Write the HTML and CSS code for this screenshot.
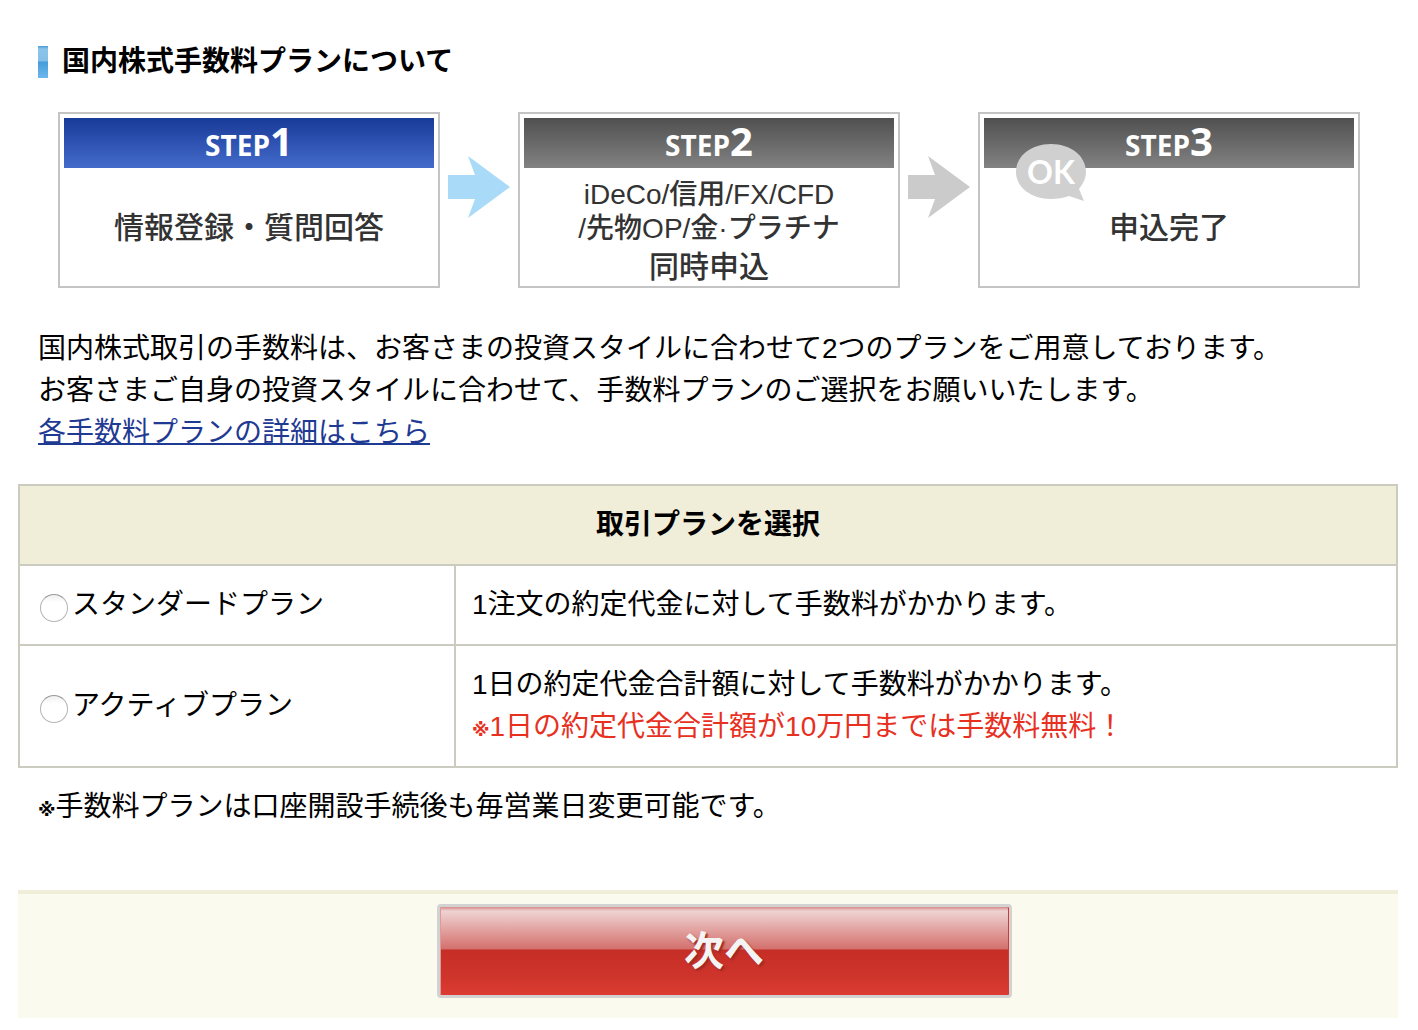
FILE: index.html
```
<!DOCTYPE html>
<html lang="ja">
<head>
  <meta charset="UTF-8">
  <title>国内株式手数料プランについて</title>
  <meta name="viewport" content="width=device-width, initial-scale=1.0">
  <link rel="stylesheet" href="styles.css">
</head>
<body>
  <h1 class="page-title">国内株式手数料プランについて</h1>

  <!-- Steps -->
  <div class="steps">
    <div class="step current">
      <div class="step-head">STEP<span class="num">1</span></div>
      <div class="step-body">情報登録・質問回答</div>
    </div>
    <svg class="arrow active" viewBox="0 0 62 62"><path d="M0 19H27L20 0L62 31L20 62L27 43H0Z"/></svg>
    <div class="step">
      <div class="step-head">STEP<span class="num">2</span></div>
      <div class="step-body">
        <div class="step-list">iDeCo/信用/FX/CFD<br>/先物OP/金·プラチナ</div>
        <div>同時申込</div>
      </div>
    </div>
    <svg class="arrow" viewBox="0 0 62 62"><path d="M0 19H27L20 0L62 31L20 62L27 43H0Z"/></svg>
    <div class="step">
      <div class="step-head">STEP<span class="num">3</span></div>
      <div class="step-body">申込完了</div>
      <div class="ok">
        <svg class="bubble" viewBox="0 0 72 58"><path d="M36 0C56 0 71 12 71 28C71 34 68 40 64 45L69 57L54 52C49 54 42 55 36 55C16 55 1 43 1 28C1 12 16 0 36 0Z"/></svg>
        <span class="ok-text">OK</span>
      </div>
    </div>
  </div>

  <div class="lead">
    国内株式取引の手数料は、お客さまの投資スタイルに合わせて2つのプランをご用意しております。<br>
    お客さまご自身の投資スタイルに合わせて、手数料プランのご選択をお願いいたします。<br>
    <a href="#">各手数料プランの詳細はこちら</a>
  </div>

  <form>
    <table class="plans">
      <tr>
        <th colspan="2">取引プランを選択</th>
      </tr>
      <tr>
        <td class="plan"><div class="choice"><input type="radio" name="plan" id="standard"><label for="standard">スタンダードプラン</label></div></td>
        <td>1注文の約定代金に対して手数料がかかります。</td>
      </tr>
      <tr>
        <td class="plan"><div class="choice"><input type="radio" name="plan" id="active"><label for="active">アクティブプラン</label></div></td>
        <td>1日の約定代金合計額に対して手数料がかかります。<br><span class="red"><span class="mark">※</span>1日の約定代金合計額が10万円までは手数料無料！</span></td>
      </tr>
    </table>

    <p class="note"><span class="mark">※</span>手数料プランは口座開設手続後も毎営業日変更可能です。</p>

    <div class="submit-area">
      <button type="submit" class="next">次へ</button>
    </div>
  </form>
</body>
</html>
```
FILE: styles.css
```
* {
  box-sizing: border-box;
}

body {
  margin: 0;
  padding: 41px 20px 12px 18px;
  font-family: "Liberation Sans", "Noto Sans CJK JP", sans-serif;
  font-size: 28px;
  line-height: 42px;
  color: #000;
  background: #fff;
}

.page-title {
  display: flex;
  align-items: center;
  gap: 14px;
  margin: 0 20px;
  font-size: 28px;
  font-weight: bold;
}

.page-title::before {
  content: "";
  width: 10px;
  height: 32px;
  background: linear-gradient(#4a9cd6 0, #8cc4ea 3px, #84bee8 15px, #459cda 16px, #5aaae4 24px, #6cb8ee);
}

/* steps */
.steps {
  display: flex;
  align-items: stretch;
  gap: 8px;
  margin: 29px 38px 40px 40px;
}

.step {
  position: relative;
  flex: 1;
  display: flex;
  flex-direction: column;
  min-height: 176px;
  padding: 4px;
  border: 2px solid #c4c4c4;
  color: #333;
}

.step-head {
  height: 50px;
  line-height: 46px;
  background: linear-gradient(#505050, #828282);
  color: #fff;
  font-family: "Open Sans", sans-serif;
  font-size: 28px;
  font-weight: bold;
  text-align: center;
}

.step.current .step-head {
  background: linear-gradient(#183a98, #446bcb);
}

.step-head .num {
  font-size: 40px;
}

.step-body {
  flex: 1;
  display: flex;
  flex-direction: column;
  justify-content: center;
  font-family: "Noto Sans CJK JP", sans-serif;
  font-size: 30px;
  font-weight: 500;
  line-height: 36px;
  text-align: center;
}

.step-list {
  padding-top: 10px;
  font-family: "Liberation Sans", "Noto Sans CJK JP", sans-serif;
  font-size: 28px;
  line-height: 34px;
}

.arrow {
  flex: none;
  align-self: flex-start;
  width: 62px;
  height: 62px;
  margin-top: 44px;
  fill: #cbcbcb;
}

.arrow.active {
  fill: #a9dbf9;
}

.ok {
  position: absolute;
  top: 30px;
  left: 35px;
  width: 72px;
  height: 58px;
}

.bubble {
  display: block;
  width: 72px;
  height: 58px;
  fill: #d0d0d0;
}

.ok-text {
  position: absolute;
  top: 0;
  left: 0;
  width: 72px;
  line-height: 56px;
  color: #fff;
  font-family: Lato, sans-serif;
  font-size: 32px;
  font-weight: bold;
  text-align: center;
}

.lead {
  margin: 0 20px 30px;
}

.lead a {
  color: #1f3a93;
  text-decoration-thickness: 2px;
}

/* plan table */
.plans {
  width: 100%;
  border-collapse: collapse;
}

.plans th,
.plans td {
  padding: 18px 16px;
  border: 2px solid #cbcbbf;
  text-align: left;
  vertical-align: middle;
}

.plans th {
  background: #f0edd9;
  text-align: center;
}

.plans .plan {
  width: 436px;
  padding-left: 20px;
}

.choice {
  display: flex;
  align-items: center;
  gap: 4px;
}

.choice input {
  appearance: none;
  width: 28px;
  height: 28px;
  margin: 6px 0 0;
  border: 1px solid #b4b4b4;
  border-top-color: #999;
  border-radius: 50%;
  background: linear-gradient(#f0f0f0, #fff 30%);
}

.choice input:checked {
  background: radial-gradient(#333 30%, #fff 35%);
}

.red {
  color: #e8301f;
}

.mark {
  font-family: "DejaVu Sans", sans-serif;
  font-size: 18px;
  font-weight: bold;
  line-height: 20px;
}

.note {
  margin: 18px 20px 62px;
}

/* submit */
.submit-area {
  display: flex;
  justify-content: center;
  padding: 10px 0 20px 32px;
  border-top: 4px solid #f0edd9;
  background: #fafaee;
}

.next {
  width: 575px;
  height: 94px;
  padding: 0 0 6px;
  border: 3px solid #d2d2d2;
  border-radius: 4px;
  background: linear-gradient(#d88a87 0, #efd3d3 4px, #d4706c 42px, #c52e26 43px, #ce342b 68px, #dc3c32);
  box-shadow: inset -1px 0 #d03a32, inset 1px 0 #e09a96;
  color: #f4f4f4;
  font-family: "Noto Sans CJK JP", sans-serif;
  font-size: 40px;
  font-weight: bold;
  text-shadow: 2px 2px 2px #a02a24;
  cursor: pointer;
}
```
